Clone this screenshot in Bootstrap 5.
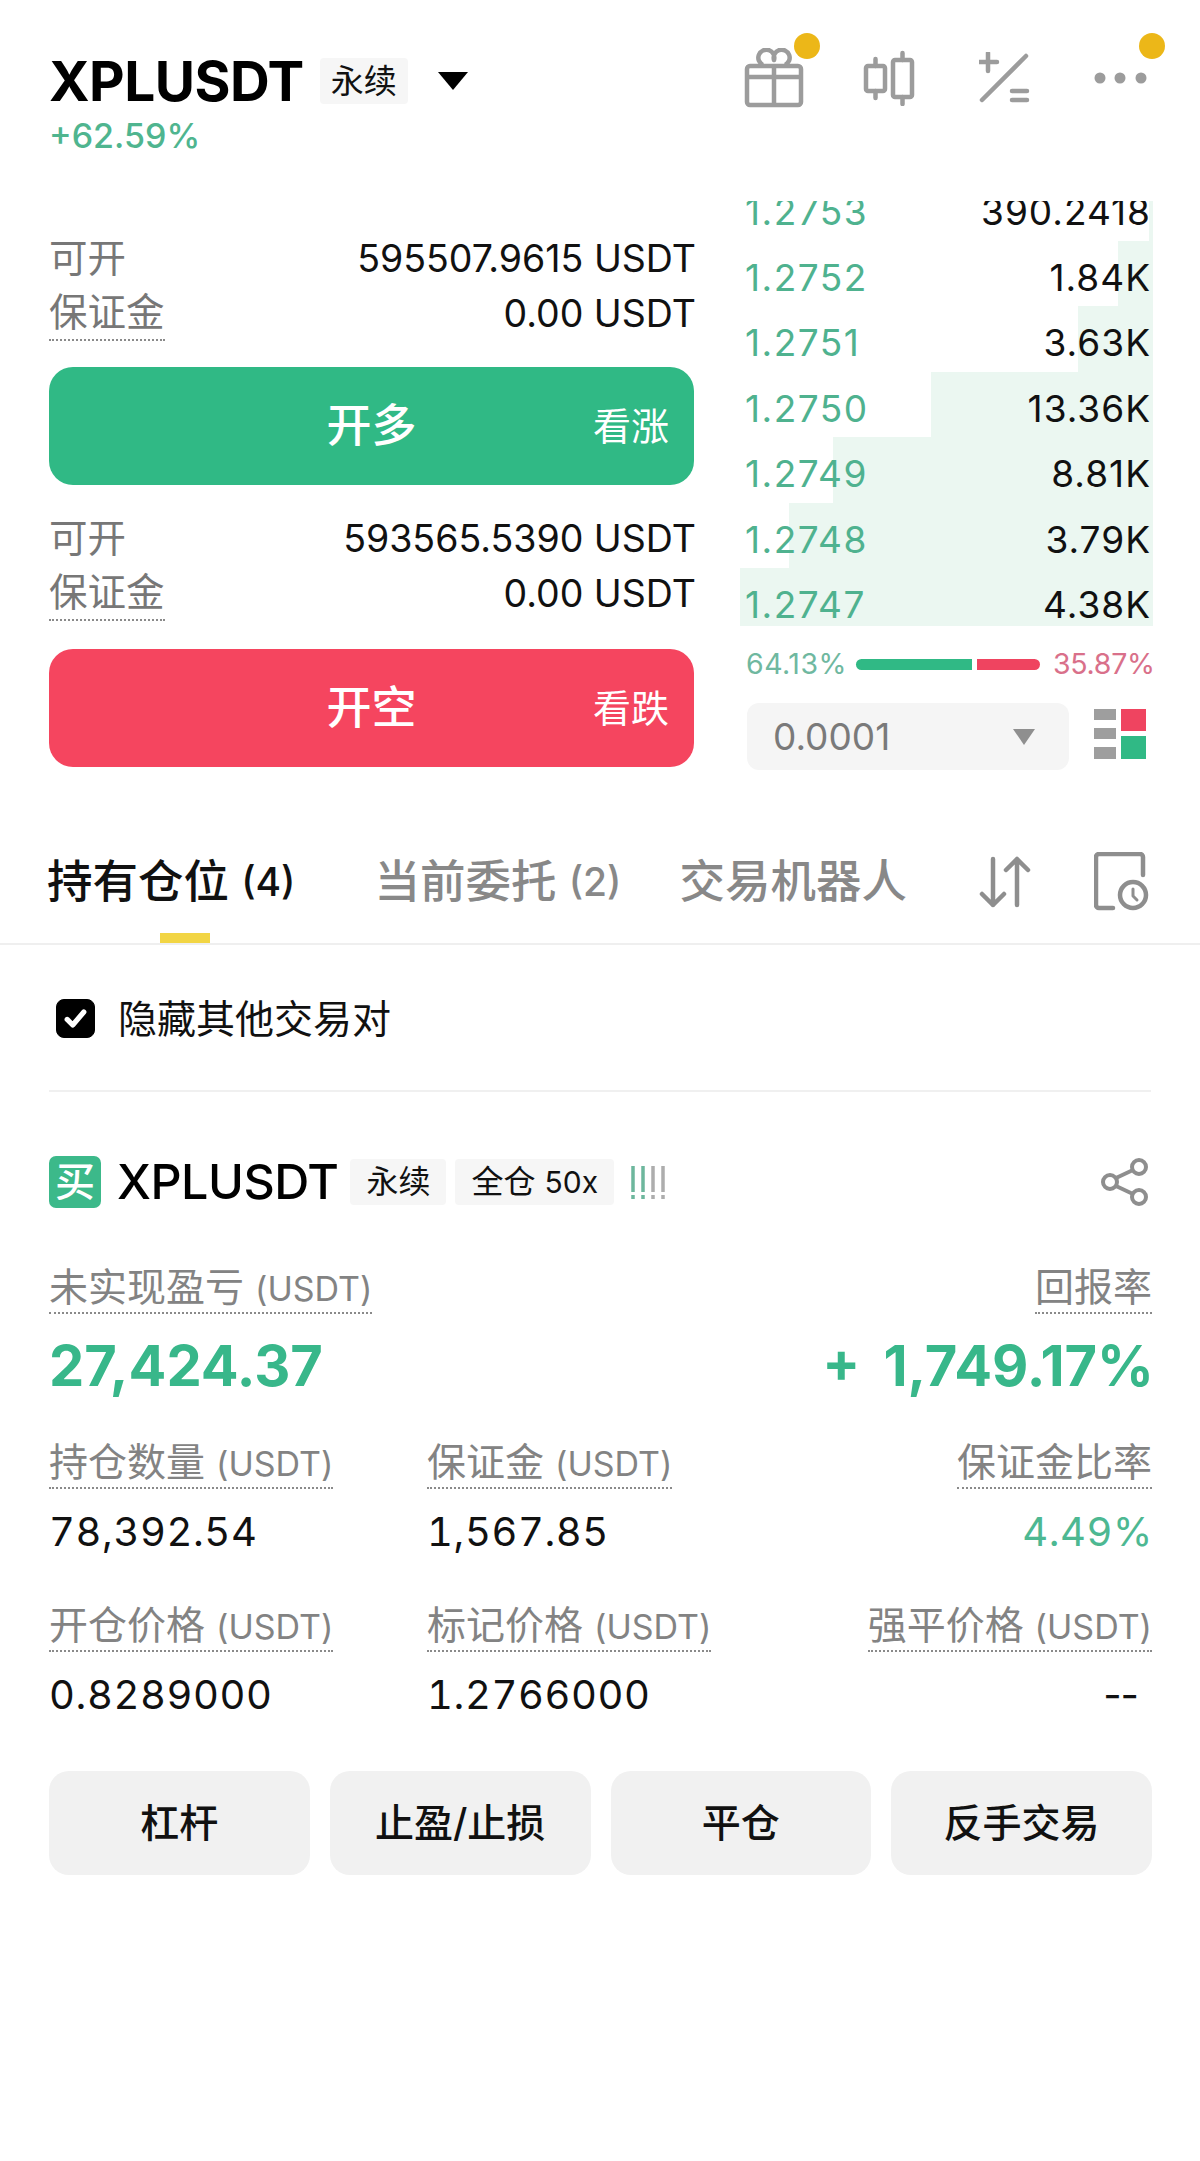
<!DOCTYPE html>
<html lang="zh-CN">
<head>
<meta charset="utf-8">
<title>XPLUSDT</title>
<link rel="stylesheet" href="https://cdn.jsdelivr.net/npm/bootstrap@5.3.0/dist/css/bootstrap.min.css">
<style>
html,body{background:#fff;}
body{font-family:Inter,"Noto Sans CJK SC",sans-serif;color:#111;}
.app-shell{width:1200px;height:2161px;overflow:hidden;background:#fff;}
.top-head{height:201px;padding:49px 49px 0 49px;}
.sym-title{font-size:55px;font-weight:700;line-height:64px;letter-spacing:-.5px;color:#000;}
.tag-chip{background:#f6f6f6;border-radius:4px;font-size:33px;line-height:46px;height:46px;padding:0 11px;color:#111;}
.caret-down{width:30px;height:18px;margin-left:30px;}
.chg-text{font-size:34px;line-height:40px;color:#4fb58f;font-weight:500;margin-top:3px;}
.head-icons{position:relative;width:420px;height:58px;padding-right:1px;}
.head-ico{display:block;}
.ico-gift{width:60px;height:60px;margin-right:59px;}
.ico-candle{width:52px;height:56px;margin-right:64px;}
.ico-calc{width:52px;height:52px;margin-right:63px;}
.ico-more{width:56px;height:16px;}
.notice-dot{position:absolute;width:26px;height:26px;border-radius:50%;background:#ecb718;}
.dot-a{left:63px;top:-16px;}
.dot-b{left:408px;top:-16px;}
.trade-zone{height:600px;padding:0 49px;}
.form-side{width:645px;padding-top:30px;}
.info-row{height:55px;line-height:55px;}
.info-key{color:#777;font-size:38.5px;}
.info-val{color:#111;font-size:37.5px;margin-right:-2px;}
.dot-under{border-bottom:2px dotted #8a8a8a;display:inline-block;}
.info-row .dot-under{line-height:52px;height:55px;}
.act-btn{position:relative;width:100%;height:118px;border-radius:24px;border:0;color:#fff;font-size:45px;font-weight:500;margin-top:26px;margin-bottom:26px;display:flex;align-items:center;justify-content:center;padding:0;}
.act-up{background:#30b985;}
.act-down{background:#f5455f;margin-top:28px;margin-bottom:0;}
.act-up:hover,.act-up:active{background:#30b985!important;color:#fff!important;}
.act-down:hover,.act-down:active{background:#f5455f!important;color:#fff!important;}
.act-hint{position:absolute;right:25px;top:36px;font-size:38px;font-weight:400;line-height:46px;}
.book-side{width:413px;margin-left:46px;margin-right:-2px;}
.book-window{height:425px;overflow:hidden;}
.book-list{margin-top:-26px;}
.book-line{height:65.5px;padding:16px 2px 0 5px;line-height:42px;font-size:37px;background:linear-gradient(to left,#ebf7f1 var(--w),transparent var(--w));}
.book-price{color:#4fb28f;letter-spacing:1.5px;}
.book-amt{color:#111;letter-spacing:1px;}
.ratio-line{height:26px;margin-top:25px;padding:0 0 0 6px;font-size:28.5px;line-height:26px;white-space:nowrap;}
.ratio-buy{flex:none;color:#6fb8a0;width:110px;letter-spacing:.5px;}
.ratio-sell{flex:none;color:#d9708a;margin-left:13px;letter-spacing:-.3px;}
.ratio-g{flex:none;width:116px;height:11px;background:#30b985;border-radius:6px 0 0 6px;}
.ratio-r{flex:none;width:63px;height:11px;background:#ef4460;border-radius:0 6px 6px 0;margin-left:5px;}
.tick-row{margin-top:26px;padding-left:7px;}
.tick-box{width:322px;height:67px;background:#f5f5f5;border-radius:12px;padding:0 34px 0 26px;font-size:37px;color:#7a7a7a;}
.tick-caret{width:22px;height:16px;}
.layout-ico{width:52px;height:50px;margin-left:25px;margin-top:-6px;}
.tab-strip{height:144px;padding:0 50px 0 47px;border-bottom:2px solid #efefef;}
.tab-item{position:relative;height:142px;display:flex;align-items:center;font-size:45.5px;font-weight:500;color:#888;padding-top:20px;white-space:nowrap;}
.tab-item.is-on{color:#111;}
.tab-item.is-on::after{content:"";position:absolute;left:113px;bottom:0;width:50px;height:10px;background:#f2d544;}
.tab-gap1{margin-left:79px;}
.tab-gap2{margin-left:58px;}
.tab-num{font-size:39px;}
.tab-sort{width:52px;height:52px;margin-left:auto;margin-top:20px;}
.tab-hist{width:56px;height:60px;margin-left:63px;margin-top:20px;}
.hide-row{height:147px;margin:0 49px;border-bottom:2px solid #f0f0f0;padding:2px 0 0 7px;}
.hide-row .form-check-input{width:39px;height:39px;margin:0 23px 0 0;border-radius:8px;background-color:#000;border-color:#000;background-size:100%;float:none;background-image:url("data:image/svg+xml,%3csvg xmlns='http://www.w3.org/2000/svg' viewBox='0 0 20 20'%3e%3cpath fill='none' stroke='%23fff' stroke-linecap='round' stroke-linejoin='round' stroke-width='2.8' d='M5.5 10.5l3 3 6-7'/%3e%3c/svg%3e");}
.hide-row .form-check-label{font-size:39px;line-height:46px;color:#111;}
.pos-area{padding:0 48px 0 49px;}
.pos-head{height:52px;margin-top:64px;}
.buy-mark{width:52px;height:52px;border-radius:7px;background:#3cb98a;color:#fff;font-size:40px;font-weight:500;line-height:52px;text-align:center;margin-right:16px;}
.pos-sym{font-size:48.5px;font-weight:500;color:#000;line-height:52px;letter-spacing:-.5px;margin-right:12px;}
.pos-chip{background:#f6f6f6;border-radius:4px;height:46px;line-height:46px;font-size:32px;padding:0 16px;margin-right:9px;white-space:nowrap;}
.pos-chip small{font-size:30px;}
.warn-bars{width:38px;height:38px;margin-left:7px;}
.share-ico{width:48px;height:48px;margin-left:auto;margin-right:3px;}
.stat-label{font-size:39px;color:#838383;line-height:50px;height:52px;border-bottom:2px dotted #8a8a8a;display:block;width:fit-content;white-space:nowrap;}
.stat-unit{font-size:34px;}
.stat-big{font-size:56px;font-weight:700;color:#38b78a;line-height:72px;}
.big-right{word-spacing:10px;margin-right:-2px;}
.pnl-row{margin-top:54px;}
.pnl-vals{margin-top:16px;}
.stat-grid{display:grid;grid-template-columns:378px 1fr auto;}
.stat-grid>div:last-child{text-align:right;}
.stat-grid>div:last-child .stat-label{margin-left:auto;}
.stat-val{font-size:40px;letter-spacing:.6px;line-height:50px;color:#111;margin-top:18px;font-variant-numeric:tabular-nums;}
.stat-green{color:#4db892;margin-right:-1px;}
.stat-dash{letter-spacing:-1px;margin-right:14px;font-variant-numeric:normal;}
.grid-a{margin-top:35px;}
.grid-b{margin-top:43px;}
.pos-actions{margin-top:51px;gap:20px;}
.pos-btn{flex:1 1 0;height:104px;border-radius:20px;background:#f1f1f1;border:0;color:#111;font-size:39px;font-weight:500;padding:0;}
.pos-btn:hover,.pos-btn:active{background:#f1f1f1!important;color:#111!important;}
</style>
</head>
<body>
<div class="app-shell">

<header class="top-head d-flex justify-content-between">
  <div>
    <div class="d-flex align-items-center">
      <span class="sym-title">XPLUSDT</span>
      <span class="tag-chip ms-3">永续</span>
      <svg class="caret-down" viewBox="0 0 30 18"><path d="M0 0H30L15 18Z" fill="#000"/></svg>
    </div>
    <div class="chg-text">+62.59%</div>
  </div>
  <div class="head-icons d-flex align-items-center justify-content-end">
    <svg class="head-ico ico-gift" viewBox="0 0 60 60" fill="none" stroke="#9c9c9c" stroke-width="4.5" stroke-linejoin="round"><rect x="3" y="18" width="54" height="39" rx="3"/><path d="M3 29H57M30 18V57"/><path d="M19 17A8 8 0 1 1 30 12A8 8 0 1 1 41 17"/></svg>
    <svg class="head-ico ico-candle" viewBox="0 0 52 56" fill="none" stroke="#9c9c9c" stroke-width="4.5" stroke-linecap="round" stroke-linejoin="round"><rect x="3" y="16" width="19" height="25" rx="2"/><path d="M12.500 9V16M12.500 41V48"/><rect x="30" y="10" width="19" height="37" rx="2"/><path d="M39.500 3V10M39.500 47V54"/></svg>
    <svg class="head-ico ico-calc" viewBox="0 0 52 52" fill="none" stroke="#9c9c9c" stroke-linecap="round"><path d="M47 4L3 48" stroke-width="4.500"/><path d="M0 10H18M9 1V19" stroke-width="4.500"/><path d="M33 39H48M33 48H48" stroke-width="4.500"/></svg>
    <svg class="head-ico ico-more" viewBox="0 0 56 16" fill="#9c9c9c"><circle cx="6" cy="8" r="5.500"/><circle cx="26" cy="8" r="5.500"/><circle cx="47" cy="8" r="5.500"/></svg>
    <span class="notice-dot dot-a"></span>
    <span class="notice-dot dot-b"></span>
  </div>
</header>

<section class="trade-zone d-flex">
  <div class="form-side">
    <div class="info-row d-flex justify-content-between"><span class="info-key">可开</span><span class="info-val">595507.9615 USDT</span></div>
    <div class="info-row d-flex justify-content-between"><span class="info-key dot-under">保证金</span><span class="info-val">0.00 USDT</span></div>
    <button type="button" class="btn act-btn act-up">开多<span class="act-hint">看涨</span></button>
    <div class="info-row d-flex justify-content-between"><span class="info-key">可开</span><span class="info-val">593565.5390 USDT</span></div>
    <div class="info-row d-flex justify-content-between"><span class="info-key dot-under">保证金</span><span class="info-val">0.00 USDT</span></div>
    <button type="button" class="btn act-btn act-down">开空<span class="act-hint">看跌</span></button>
  </div>
  <div class="book-side">
    <div class="book-window">
      <div class="book-list">
        <div class="book-line d-flex justify-content-between" style="--w:4px"><span class="book-price">1.2753</span><span class="book-amt">390.2418</span></div>
        <div class="book-line d-flex justify-content-between" style="--w:35px"><span class="book-price">1.2752</span><span class="book-amt">1.84K</span></div>
        <div class="book-line d-flex justify-content-between" style="--w:75px"><span class="book-price">1.2751</span><span class="book-amt">3.63K</span></div>
        <div class="book-line d-flex justify-content-between" style="--w:222px"><span class="book-price">1.2750</span><span class="book-amt">13.36K</span></div>
        <div class="book-line d-flex justify-content-between" style="--w:320px"><span class="book-price">1.2749</span><span class="book-amt">8.81K</span></div>
        <div class="book-line d-flex justify-content-between" style="--w:364px"><span class="book-price">1.2748</span><span class="book-amt">3.79K</span></div>
        <div class="book-line d-flex justify-content-between" style="--w:413px"><span class="book-price">1.2747</span><span class="book-amt">4.38K</span></div>
      </div>
    </div>
    <div class="ratio-line d-flex align-items-center">
      <span class="ratio-buy">64.13%</span><span class="ratio-g"></span><span class="ratio-r"></span><span class="ratio-sell">35.87%</span>
    </div>
    <div class="tick-row d-flex align-items-center">
      <div class="tick-box d-flex align-items-center justify-content-between"><span>0.0001</span><svg class="tick-caret" viewBox="0 0 22 16"><path d="M0 0H22L11 16Z" fill="#8f8f8f"/></svg></div>
      <svg class="layout-ico" viewBox="0 0 52 50"><g fill="#9e9e9e"><rect x="0" y="0" width="22" height="11"/><rect x="0" y="19" width="22" height="11"/><rect x="0" y="38" width="22" height="12"/></g><rect x="27" y="0" width="25" height="22" fill="#ef4460"/><rect x="27" y="27" width="25" height="23" fill="#30b985"/></svg>
    </div>
  </div>
</section>

<nav class="tab-strip d-flex align-items-center">
  <div class="tab-item is-on">持有仓位&nbsp;<span class="tab-num">(4)</span></div>
  <div class="tab-item tab-gap1">当前委托&nbsp;<span class="tab-num">(2)</span></div>
  <div class="tab-item tab-gap2">交易机器人</div>
  <svg class="tab-sort" viewBox="0 0 52 52" fill="none" stroke="#8e8e8e" stroke-width="4.500" stroke-linecap="round" stroke-linejoin="round"><path d="M14 3V49M3 38L14 49L25 38"/><path d="M38 49V3M27 14L38 3L49 14"/></svg>
  <svg class="tab-hist" viewBox="0 0 56 60" fill="none" stroke="#8e8e8e" stroke-width="4.500" stroke-linecap="round" stroke-linejoin="round"><path d="M19 56H5A3 3 0 0 1 2 53V5A3 3 0 0 1 5 2H46A3 3 0 0 1 49 5V23"/><circle cx="39" cy="43" r="13"/><path d="M39 37V44L43 48" stroke-width="3"/></svg>
</nav>

<div class="hide-row form-check d-flex align-items-center mb-0">
  <input class="form-check-input" type="checkbox" id="hideOther" checked>
  <label class="form-check-label" for="hideOther">隐藏其他交易对</label>
</div>

<section class="pos-area">
  <div class="pos-head d-flex align-items-center">
    <span class="buy-mark">买</span>
    <span class="pos-sym">XPLUSDT</span>
    <span class="pos-chip">永续</span>
    <span class="pos-chip">全仓 <small>50x</small></span>
    <svg class="warn-bars" viewBox="0 0 38 38" fill="none" stroke-width="3.500"><g stroke="#6db79d"><path d="M3 3V29M3 32V36M13 3V29M13 32V36"/></g><g stroke="#adadad"><path d="M23 3V29M23 32V36M33 3V29M33 32V36"/></g></svg>
    <svg class="share-ico" viewBox="0 0 48 48" fill="none" stroke="#8e8e8e" stroke-width="4"><circle cx="9" cy="24" r="7"/><circle cx="38" cy="9" r="7"/><circle cx="38" cy="39" r="7"/><path d="M15 20L32 12M15 28L32 36"/></svg>
  </div>

  <div class="pnl-row d-flex justify-content-between">
    <span class="stat-label">未实现盈亏 <span class="stat-unit">(USDT)</span></span>
    <span class="stat-label">回报率</span>
  </div>
  <div class="pnl-vals d-flex justify-content-between">
    <span class="stat-big">27,424.37</span>
    <span class="stat-big big-right">+ 1,749.17%</span>
  </div>

  <div class="stat-grid grid-a">
    <div><span class="stat-label">持仓数量 <span class="stat-unit">(USDT)</span></span><div class="stat-val">78,392.54</div></div>
    <div><span class="stat-label">保证金 <span class="stat-unit">(USDT)</span></span><div class="stat-val">1,567.85</div></div>
    <div><span class="stat-label">保证金比率</span><div class="stat-val stat-green">4.49%</div></div>
  </div>
  <div class="stat-grid grid-b">
    <div><span class="stat-label">开仓价格 <span class="stat-unit">(USDT)</span></span><div class="stat-val">0.8289000</div></div>
    <div><span class="stat-label">标记价格 <span class="stat-unit">(USDT)</span></span><div class="stat-val">1.2766000</div></div>
    <div><span class="stat-label">强平价格 <span class="stat-unit">(USDT)</span></span><div class="stat-val stat-dash">--</div></div>
  </div>

  <div class="pos-actions d-flex justify-content-between">
    <button type="button" class="btn pos-btn">杠杆</button>
    <button type="button" class="btn pos-btn">止盈/止损</button>
    <button type="button" class="btn pos-btn">平仓</button>
    <button type="button" class="btn pos-btn">反手交易</button>
  </div>
</section>

</div>
<script src="https://cdn.jsdelivr.net/npm/bootstrap@5.3.0/dist/js/bootstrap.bundle.min.js"></script>
</body>
</html>
